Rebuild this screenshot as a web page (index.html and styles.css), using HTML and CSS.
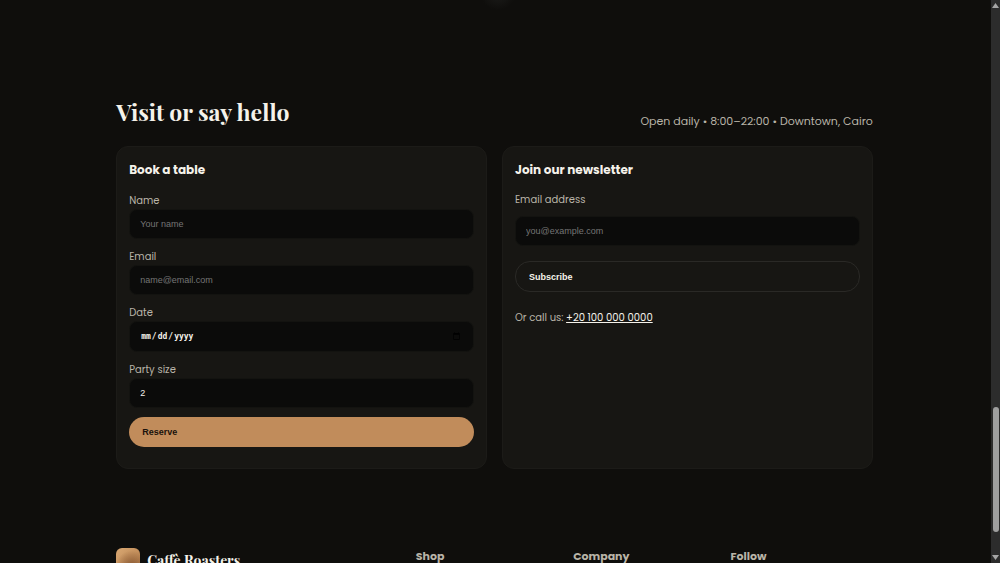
FILE: index.html
```html
<!DOCTYPE html>
<html lang="en">

<head>
    <meta charset="UTF-8">
    <meta name="viewport" content="width=device-width, initial-scale=1">
    <title>Caffè Roasters</title>
    <link rel="stylesheet" href="styles.css">
</head>

<body>
    <main class="container">
        <section class="visit">
            <header class="section-head">
                <h2>Visit or say hello</h2>
                <p>Open daily • 8:00–22:00 • Downtown, Cairo</p>
            </header>
            <div class="cards">
                <form class="card">
                    <h3>Book a table</h3>
                    <div class="field">
                        <label for="name">Name</label>
                        <input id="name" type="text" placeholder="Your name">
                    </div>
                    <div class="field">
                        <label for="email">Email</label>
                        <input id="email" type="email" placeholder="name@email.com">
                    </div>
                    <div class="field">
                        <label for="date">Date</label>
                        <input id="date" type="date">
                    </div>
                    <div class="field">
                        <label for="size">Party size</label>
                        <select id="size">
                            <option>1</option>
                            <option selected>2</option>
                            <option>3</option>
                            <option>4</option>
                        </select>
                    </div>
                    <button class="btn btn-primary" type="button">Reserve</button>
                </form>
                <form class="card newsletter">
                    <h3>Join our newsletter</h3>
                    <label for="news">Email address</label>
                    <input id="news" type="email" placeholder="you@example.com">
                    <button class="btn btn-ghost" type="button">Subscribe</button>
                    <p>Or call us: <a href="tel:+201000000000">+20 100 000 0000</a></p>
                </form>
            </div>
        </section>
    </main>
    <footer class="container footer">
        <div class="brand">
            <span class="logo"></span>
            <strong>Caffè Roasters</strong>
        </div>
        <h4>Shop</h4>
        <h4>Company</h4>
        <h4>Follow</h4>
    </footer>

    <!-- Scrollbar -->
    <div class="scrollbar" aria-hidden="true">
        <svg viewBox="0 0 9 12"><path d="M4.5 3 L8 8 H1 Z"/></svg>
        <div class="track"><div class="thumb"></div></div>
        <svg viewBox="0 0 9 12"><path d="M1 4 H8 L4.5 9 Z"/></svg>
    </div>
</body>

</html>
```

FILE: styles.css
```css
* {
    box-sizing: border-box;
}

body {
    margin: 0;
    padding-right: 11px;
    height: 100vh;
    overflow: hidden;
    background: radial-gradient(circle at 498px -8px, #1d1d1b, #0f0e0c 18px);
    color: #f5f2ea;
    font-family: Poppins, Inter, sans-serif;
    font-size: 11px;
    line-height: 17px;
}

h2,
h3,
h4,
p {
    margin: 0;
}

.container {
    width: 76.5%;
    margin: 0 auto;
}

.visit {
    padding: 94px 0 79px;
}

.section-head {
    display: flex;
    justify-content: space-between;
    align-items: flex-end;
    margin-bottom: 16px;
    color: #b9b4a8;
}

.section-head h2 {
    color: #f5f2ea;
    font-family: "Playfair Display", "Liberation Serif", serif;
    font-size: 23px;
    line-height: 36px;
}

.cards {
    display: grid;
    grid-template-columns: 1fr 1fr;
    gap: 15px;
}

.card {
    padding: 13px 12px 21px;
    background-color: #171613;
    border: 1px solid #1c1b18;
    border-radius: 12px;
}

.card h3 {
    margin-bottom: 12px;
    font-size: 12px;
    line-height: 20px;
}

.card label,
.card p {
    display: block;
    color: #b9b4a8;
    font-size: 10px;
}

.field {
    margin-bottom: 9px;
}

.card input,
.card select {
    display: block;
    width: 100%;
    height: 30px;
    padding: 0 10px;
    appearance: none;
    background-color: #0b0b0a;
    border: 1px solid #131310;
    border-radius: 8px;
    color: #f5f2ea;
    font-family: "Liberation Sans", Arial, sans-serif;
    font-size: 9px;
}

.card input::placeholder {
    color: #757575;
}

.card input[type="date"] {
    height: 31px;
    font-family: "DejaVu Sans Mono", monospace;
    font-size: 8px;
    font-weight: bold;
}

.card input::-webkit-calendar-picker-indicator {
    width: 9px;
    height: 9px;
}

.btn {
    display: block;
    width: 100%;
    height: 30px;
    padding: 0 13px;
    border: 0;
    border-radius: 15px;
    font-family: "Liberation Sans", Arial, sans-serif;
    font-size: 9px;
    font-weight: bold;
    text-align: left;
}

.btn-primary {
    background-color: #c18c5b;
    color: #1a120b;
}

.btn-ghost {
    height: 31px;
    background-color: transparent;
    border: 1px solid #2a2926;
    color: #f5f2ea;
}

.newsletter h3 {
    margin-bottom: 11px;
}

.newsletter input {
    margin: 8px 0 15px;
}

.newsletter p {
    margin-top: 17px;
}

.newsletter a {
    color: #f5f2ea;
}

.footer {
    display: grid;
    grid-template-columns: 2fr 1fr 1fr 1fr;
    gap: 15px;
    color: #b9b4a8;
}

.footer h4 {
    font-size: 11px;
}

.brand {
    display: flex;
    align-items: center;
    gap: 7px;
    color: #f5f2ea;
    font-family: "Playfair Display", "Liberation Serif", serif;
    font-size: 14px;
}

.logo {
    width: 24px;
    height: 24px;
    border-radius: 6px;
    background: radial-gradient(circle at 65% 75%, #8c5c35, transparent 65%), linear-gradient(135deg, #d9a873, #b17a48);
}

.scrollbar {
    position: fixed;
    top: 0;
    right: 0;
    bottom: 0;
    width: 9px;
    display: flex;
    flex-direction: column;
    background-color: #2c2c2c;
}

.scrollbar svg {
    height: 12px;
    fill: #a5a5a5;
}

.track {
    flex: 1;
    display: flex;
    flex-direction: column;
    justify-content: flex-end;
    padding: 0 1px 19px 2px;
}

.thumb {
    height: 24%;
    border-radius: 3px;
    background-color: #9f9f9f;
}
```
